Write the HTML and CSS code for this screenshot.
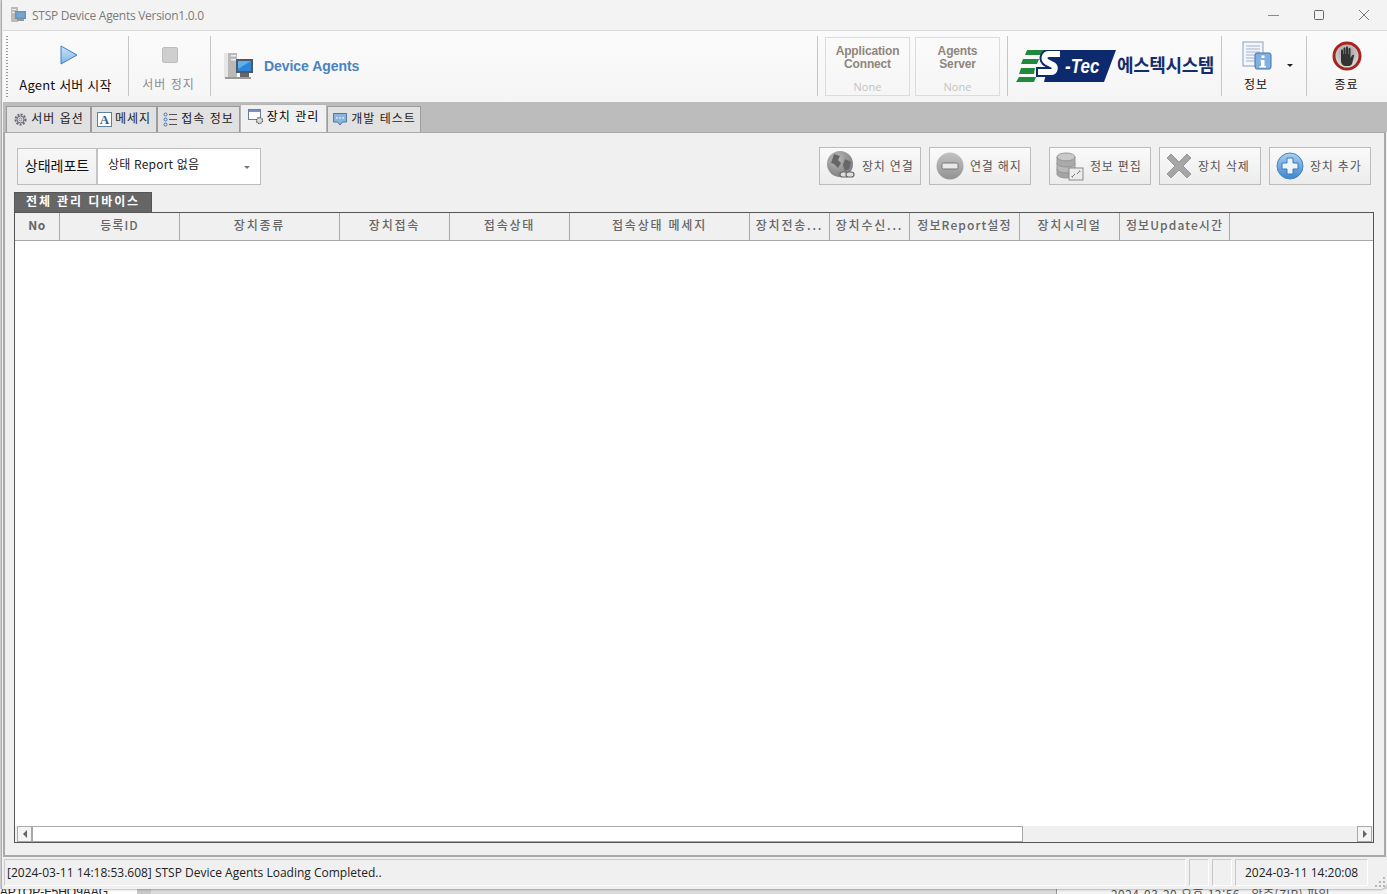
FILE: index.html
```html
<!DOCTYPE html>
<html lang="ko">
<head>
<meta charset="utf-8">
<title>STSP Device Agents Version1.0.0</title>
<link rel="stylesheet" href="styles.css">
</head>
<body>
<div class="window">
  <header class="titlebar">
    <svg class="app-icon" width="18" height="18" viewBox="0 0 18 18"><rect x="1" y="1" width="7" height="15" fill="#a9a9a9"/><rect x="2" y="3" width="4" height="1" fill="#eee"/><rect x="2" y="6" width="4" height="1" fill="#eee"/><rect x="5" y="5" width="11" height="8" fill="#4a6f94"/><rect x="6.500" y="6.500" width="8" height="5" fill="#3f8fd2"/><rect x="7" y="13" width="7" height="2" fill="#777"/></svg>
    <span class="title-text">STSP Device Agents Version1.0.0</span>
    <div class="caption">
      <svg width="14" height="14" viewBox="0 0 14 14"><path d="M1 7.500h11" stroke="#8a8a8a" fill="none"/></svg>
      <svg width="14" height="14" viewBox="0 0 14 14"><rect x="2.500" y="2.500" width="9" height="9" rx="1" stroke="#666" fill="none"/></svg>
      <svg width="14" height="14" viewBox="0 0 14 14"><path d="M2 2l10 10M12 2L2 12" stroke="#777" fill="none"/></svg>
    </div>
  </header>

  <section class="toolbar">
    <div class="grip"></div>
    <div class="tool tool-start">
      <svg width="20" height="20" viewBox="0 0 20 20"><defs><linearGradient id="play" x1="0" y1="0" x2="0" y2="1"><stop offset="0" stop-color="#cfe3f7"/><stop offset="1" stop-color="#7fb3e6"/></linearGradient></defs><path d="M2 1l16 9-16 9z" fill="url(#play)" stroke="#3f7fc8"/></svg>
      <span class="tool-label">Agent 서버 시작</span>
    </div>
    <div class="sep"></div>
    <div class="tool tool-stop">
      <svg width="16" height="16" viewBox="0 0 16 16"><rect x=".5" y=".5" width="15" height="15" rx="1.500" fill="#cfcfcf" stroke="#bdbdbd"/></svg>
      <span class="tool-label muted">서버 정지</span>
    </div>
    <div class="sep"></div>
    <div class="brand">
      <svg width="31" height="30" viewBox="0 0 31 30"><rect x="1" y="2" width="13" height="25" fill="#b9b9b9"/><rect x="1" y="2" width="4" height="25" fill="#e6e6e6"/><rect x="8" y="4" width="5" height="1.500" fill="#eee"/><rect x="8" y="8" width="5" height="1.500" fill="#eee"/><path d="M2 26h26v2H2z" fill="#999"/><rect x="13" y="8" width="17" height="14" fill="#4c5a68"/><rect x="15" y="10" width="13" height="10" fill="#2d86d6"/><path d="M15 10h13L15 18z" fill="#5fb0ee"/><rect x="17" y="22" width="9" height="4" fill="#666"/></svg>
      <span class="brand-name">Device Agents</span>
    </div>

    <div class="sep sep-push"></div>
    <div class="status-box">
      <span class="status-title">Application<br>Connect</span>
      <span class="status-value">None</span>
    </div>
    <div class="status-box status-box-narrow">
      <span class="status-title">Agents<br>Server</span>
      <span class="status-value">None</span>
    </div>
    <div class="sep"></div>
    <div class="logo">
      <svg class="logo-mark" width="100" height="32" viewBox="0 0 100 32">
        <path d="M36 0h64L88 32H28z" fill="#0d2a6e"/>
        <path d="M11 0h19l-4 5H9zM7 9h16l-2 5H5zM5 18h14l-1 6H3zM3 27h17l-2 5H0z" fill="#1f8a3c"/>
        <path d="M44 4H33c-5 0-6 6-2 8l6 3c3 2 2 7-2 7H20" fill="none" stroke="#0d2a6e" stroke-width="10"/>
        <path d="M44 4H33c-5 0-6 6-2 8l6 3c3 2 2 7-2 7H22" fill="none" stroke="#fff" stroke-width="6"/>
      </svg>
      <span class="logo-tec">-Tec</span>
      <span class="logo-ko">에스텍시스템</span>
    </div>
    <div class="sep"></div>
    <div class="tool tool-info">
      <svg width="30" height="30" viewBox="0 0 30 30"><rect x="1" y="1" width="20" height="24" fill="#f4f6fb" stroke="#8d9fc0"/><path d="M4 5h14M4 8h14M4 11h14M4 14h10M4 17h10M4 20h9" stroke="#a3b1cc"/><rect x="13" y="12" width="16" height="16" rx="2" fill="#7fb0df" stroke="#3e74ad"/><rect x="19.500" y="14.500" width="3" height="2.500" fill="#fff"/><path d="M18.500 19h4v6h1.500v1.500h-6.500V25h1.500v-4.500h-.5z" fill="#fff"/></svg>
      <span class="tool-label">정보</span>
      <span class="drop-caret"></span>
    </div>
    <div class="sep"></div>
    <div class="tool tool-exit">
      <svg width="30" height="30" viewBox="0 0 30 30"><defs><radialGradient id="hand" cx=".5" cy=".35" r=".7"><stop offset="0" stop-color="#999"/><stop offset="1" stop-color="#e8e8e8"/></radialGradient></defs><circle cx="15" cy="15" r="13" fill="url(#hand)" stroke="#a8241c" stroke-width="3"/><path d="M9 14V9.500c0-1.500 2-1.500 2 0V13h.5V7.500c0-1.500 2-1.500 2 0V13h.5V6.500c0-1.500 2-1.500 2 0V13h.5V8c0-1.500 2-1.500 2 0v9l1.500-2.500c1-1.500 2.500-.5 2 .5L20 23c-1 1.500-2 2-4 2h-2c-3 0-5-2-5-5z" fill="#333"/></svg>
      <span class="tool-label">종료</span>
    </div>
  </section>

  <section class="tabstrip">
    <div class="tab tab-options">
      <svg width="15" height="15" viewBox="0 0 15 15"><circle cx="7.500" cy="7.500" r="5" fill="none" stroke="#667" stroke-width="2" stroke-dasharray="2 1.300"/><circle cx="7.500" cy="7.500" r="3.500" fill="none" stroke="#667"/><circle cx="7.500" cy="7.500" r="1.500" fill="none" stroke="#889"/></svg>
      <span>서버 옵션</span>
    </div>
    <div class="tab tab-message">
      <span class="letter-a">A</span>
      <span>메세지</span>
    </div>
    <div class="tab tab-access">
      <svg width="15" height="15" viewBox="0 0 15 15"><circle cx="2.500" cy="2.500" r="1.500" fill="none" stroke="#3c78b8"/><circle cx="2.500" cy="7.500" r="1.500" fill="none" stroke="#3c78b8"/><circle cx="2.500" cy="12.500" r="1.500" fill="none" stroke="#3c78b8"/><path d="M6 2.500h8M6 7.500h8M6 12.500h8" stroke="#555" fill="none"/></svg>
      <span>접속 정보</span>
    </div>
    <div class="tab tab-active">
      <svg width="16" height="16" viewBox="0 0 16 16"><rect x=".5" y=".5" width="12" height="10" fill="#fff" stroke="#667f9f"/><rect x="1" y="1" width="11" height="2" fill="#6f94c0"/><circle cx="11.500" cy="11.500" r="3" fill="#ddd" stroke="#555" stroke-width="1.300" stroke-dasharray="1.500 .8"/></svg>
      <span>장치 관리</span>
    </div>
    <div class="tab tab-dev">
      <svg width="16" height="15" viewBox="0 0 16 15"><path d="M1.500 1.500h13v8.500h-4l-2.500 3-2.500-3h-4z" fill="#8db4dc" stroke="#4e77a5"/><path d="M4 5.800h1.500M7.200 5.800h1.500M10.400 5.800h1.500" stroke="#fff" stroke-width="1.300"/></svg>
      <span>개발 테스트</span>
    </div>
  </section>

  <main class="panel">
    <div class="controls">
      <div class="report">
        <div class="report-label">상태레포트</div>
        <div class="report-select">
          <span class="select-text">상태 Report 없음</span>
          <span class="select-caret"></span>
        </div>
      </div>
      <div class="actions">
        <button class="action">
          <svg width="30" height="32" viewBox="0 0 30 32"><defs><radialGradient id="globe" cx=".35" cy=".3" r=".8"><stop offset="0" stop-color="#bbb"/><stop offset="1" stop-color="#777"/></radialGradient></defs><circle cx="14" cy="14" r="13" fill="url(#globe)"/><path d="M8 4l6 2-2 4 3 3-3 5-4-4-3-1zM19 9l6 3-2 7-4 2-2-6z" fill="#666"/><rect x="14" y="22" width="8" height="5" rx="2.500" fill="#ddd" stroke="#666" stroke-width="1.200"/><rect x="20" y="22" width="8" height="5" rx="2.500" fill="#ddd" stroke="#666" stroke-width="1.200"/></svg>
          <span>장치 연결</span>
        </button>
        <button class="action">
          <svg width="28" height="28" viewBox="0 0 28 28"><defs><linearGradient id="grayball" x1="0" y1="0" x2="0" y2="1"><stop offset="0" stop-color="#c2c2c2"/><stop offset="1" stop-color="#939393"/></linearGradient></defs><circle cx="14" cy="14" r="13.500" fill="url(#grayball)"/><rect x="6" y="11" width="16" height="6" rx="1.500" fill="#e9e9e9" stroke="#777"/></svg>
          <span>연결 해지</span>
        </button>
        <button class="action action-gap">
          <svg width="28" height="29" viewBox="0 0 28 29"><ellipse cx="10" cy="5" rx="9" ry="4" fill="#c9c9c9" stroke="#999"/><path d="M1 5v6c0 2.200 4 4 9 4s9-1.800 9-4V5c0 2.200-4 4-9 4S1 7.200 1 5z" fill="#aaa" stroke="#999"/><path d="M1 11v6c0 2.200 4 4 9 4s9-1.800 9-4v-6c0 2.200-4 4-9 4s-9-1.800-9-4z" fill="#b9b9b9" stroke="#999"/><path d="M1 17v5c0 2.200 4 4 9 4s9-1.800 9-4v-5c0 2.200-4 4-9 4s-9-1.800-9-4z" fill="#a5a5a5" stroke="#999"/><rect x="13" y="16" width="14" height="12" fill="#ececec" stroke="#8a8a8a"/><path d="M16 25l3-3m-2 3h-1v-1M24 19l-3 3m2-3h1v1" stroke="#777" fill="none"/></svg>
          <span>정보 편집</span>
        </button>
        <button class="action">
          <svg width="26" height="26" viewBox="0 0 26 26"><path d="M5 1l8 8 8-8 4 4-8 8 8 8-4 4-8-8-8 8-4-4 8-8-8-8z" fill="#a6a6a6" stroke="#989898"/></svg>
          <span>장치 삭제</span>
        </button>
        <button class="action">
          <svg width="28" height="28" viewBox="0 0 28 28"><defs><linearGradient id="blueball" x1="0" y1="0" x2="0" y2="1"><stop offset="0" stop-color="#a9d0f2"/><stop offset="1" stop-color="#3b86d0"/></linearGradient></defs><circle cx="14" cy="14" r="13" fill="url(#blueball)" stroke="#4a86c0"/><path d="M11 6h6v5h5v6h-5v5h-6v-5H6v-6h5z" fill="#edf5fc" stroke="#3d78b5"/></svg>
          <span>장치 추가</span>
        </button>
      </div>
    </div>

    <div class="grid-caption">전체 관리 디바이스</div>
    <div class="grid">
      <div class="grid-head">
        <div class="col col-no">No</div>
        <div class="col col-120 col-mixed">등록ID</div>
        <div class="col col-160">장치종류</div>
        <div class="col col-110">장치접속</div>
        <div class="col col-120">접속상태</div>
        <div class="col col-180">접속상태 메세지</div>
        <div class="col col-80">장치전송...</div>
        <div class="col col-80">장치수신...</div>
        <div class="col col-110 col-mixed">정보Report설정</div>
        <div class="col col-100">장치시리얼</div>
        <div class="col col-110 col-mixed">정보Update시간</div>
      </div>
      <div class="grid-body"></div>
      <div class="hscroll">
        <div class="scroll-btn"><span class="arrow-left"></span></div>
        <div class="scroll-thumb"></div>
        <div class="scroll-track"></div>
        <div class="scroll-btn"><span class="arrow-right"></span></div>
      </div>
    </div>
  </main>

  <footer class="statusbar">
    <div class="cell cell-msg">[2024-03-11 14:18:53.608] STSP Device Agents Loading Completed..</div>
    <div class="cell cell-blank"></div>
    <div class="cell cell-blank"></div>
    <div class="cell cell-time">2024-03-11 14:20:08</div>
    <svg class="sizer" width="12" height="12" viewBox="0 0 12 12"><path d="M9 1h2v2H9zM5 5h2v2H5zM9 5h2v2H9zM1 9h2v2H1zM5 9h2v2H5zM9 9h2v2H9z" fill="#b5b5b5"/></svg>
  </footer>
</div>
<div class="desktop">
  <span class="desk-host">LAPTOP-F5HQ9AAG</span>
  <span class="desk-file">2024-03-20 오후 12:56 &nbsp; 압축(ZIP) 파일</span>
</div>
</body>
</html>
```
FILE: styles.css
```css
* { box-sizing: border-box; }
html, body { margin: 0; height: 100%; }
body {
  width: 1387px;
  height: 894px;
  overflow: hidden;
  background: #dcdcdc;
  font-family: "Liberation Sans", "Noto Sans CJK KR", sans-serif;
  font-size: 12px;
  color: #222;
  position: relative;
}
svg { display: block; flex: none; }

.window {
  height: 889px;
  margin-left: 1px;
  padding-left: 1px;
  display: flex;
  flex-direction: column;
  background: #f0f0f0;
  border-left: 1px solid #9db4c8;
  border-bottom-right-radius: 7px;
  position: relative;
  z-index: 1;
  box-shadow: 0 1px 2px rgba(0,0,0,.25);
}

/* title bar */
.titlebar {
  height: 31px;
  flex: none;
  display: flex;
  align-items: center;
  padding-left: 7px;
  background: #f3f3f3;
  border-bottom: 1px solid #d9d9d9;
}
.app-icon { margin-right: 4px; opacity: .75; }
.title-text { font: 12px "Open Sans", "Liberation Sans", sans-serif; color: #7b7b7b; letter-spacing: -.28px; }
.caption {
  margin-left: auto;
  display: flex;
  gap: 31px;
  padding-right: 16px;
}

/* toolbar */
.toolbar {
  height: 71px;
  flex: none;
  display: flex;
  align-items: stretch;
  padding: 5px 0 0 3px;
  background: linear-gradient(#fbfbfb, #f5f5f5);
  position: relative;
}
.grip {
  width: 2px;
  margin: 0 1px 5px 0;
  background-image: linear-gradient(#9a9a9a 50%, transparent 50%);
  background-size: 2px 3px;
}
.sep { width: 1px; background: #c6c6c6; margin-bottom: 6px; flex: none; }
.sep-push { margin-left: auto; }

.tool {
  display: flex;
  flex-direction: column;
  align-items: center;
  position: relative;
  flex: none;
}
.tool-label {
  font: 13px "Noto Sans CJK KR", "Liberation Sans", sans-serif;
  line-height: 18px;
  color: #111;
}
.tool-label.muted { color: #8c8c8c; }
.tool-start { width: 119px; padding-top: 9px; }
.tool-start .tool-label { margin: 11px 6px 0 0; letter-spacing: .2px; }
.tool-stop { width: 81px; padding-top: 11px; }
.tool-stop .tool-label { margin: 12px 2px 0 0; font-size: 12px; letter-spacing: 1px; }
.tool-info { width: 84px; padding-top: 5px; align-items: flex-start; padding-left: 20px; }
.tool-info .tool-label { margin-top: 4px; padding-left: 2px; font-size: 12px; letter-spacing: 1px; }
.tool-exit { width: 80px; padding-top: 5px; }
.tool-exit .tool-label { margin: 4px 1px 0 0; font-size: 12px; letter-spacing: 1px; }
.drop-caret {
  position: absolute;
  left: 65px;
  top: 28px;
  border: 3px solid transparent;
  border-top: 3px solid #222;
}

.brand {
  display: flex;
  align-items: center;
  gap: 10px;
  padding: 0 0 6px 12px;
}
.brand-name { font: bold 14px "Liberation Sans", sans-serif; color: #4a83bf; letter-spacing: -.05px; }

.status-box {
  width: 85px;
  height: 59px;
  margin: 1px 0 0 7px;
  border: 1px solid #dcdcdc;
  display: flex;
  flex-direction: column;
  align-items: center;
  text-align: center;
  padding-top: 7px;
  flex: none;
}
.status-box-narrow { margin-left: 5px; margin-right: 7px; }
.status-title { font: bold 12px/13px "Liberation Sans", sans-serif; color: #90867c; letter-spacing: -.15px; }
.status-value { font: 11px "Open Sans", sans-serif; color: #c3c3c3; margin-top: 8px; }

.logo {
  width: 213px;
  position: relative;
  display: flex;
  align-items: center;
  padding: 0 0 6px 8px;
  flex: none;
}
.logo-tec {
  position: absolute;
  left: 54px;
  top: 19px;
  font: italic bold 20px "Liberation Sans", sans-serif;
  color: #fff;
  transform: scaleX(.85);
}
.logo-ko {
  margin: 0 0 4px 1px;
  font: bold 18px "Noto Sans CJK KR", sans-serif;
  line-height: 20px;
  color: #142c6c;
  letter-spacing: -.4px;
  white-space: nowrap;
}

/* tabs */
.tabstrip {
  height: 30px;
  flex: none;
  display: flex;
  align-items: flex-end;
  padding-left: 3px;
  background: #bcbcbc;
}
.tab {
  height: 26px;
  flex: none;
  display: flex;
  align-items: center;
  justify-content: center;
  gap: 3px;
  background: #e1e1e1;
  border: 1px solid #9c9c9c;
  border-bottom: none;
  font: 12px "Noto Sans CJK KR", sans-serif;
  color: #222;
  letter-spacing: 1px;
}
.tab > span:last-child { padding-bottom: 4px; }
.tab-options { width: 85px; }
.tab-message { width: 66px; }
.tab-access { width: 83px; }
.tab-dev { width: 94px; }
.tab-active {
  width: 87px;
  height: 28px;
  background: #f0f0f0;
  border-color: #b5b5b5;
  padding-bottom: 3px;
  color: #000;
}
.letter-a {
  width: 15px;
  height: 15px;
  border: 1px solid #5c7fa8;
  background: #fff;
  font: bold 13px/13px "Liberation Serif", serif;
  color: #2e5d9a;
  text-align: center;
  letter-spacing: 0;
}

/* panel */
.panel {
  flex: 1;
  min-height: 0;
  display: flex;
  flex-direction: column;
  background: #f0f0f0;
  margin-right: 1px;
  padding: 15px 10px 12px 9px;
  border: 2px solid #a9a9a9;
  border-top: 1px solid #a9a9a9;
}
.controls {
  height: 37px;
  flex: none;
  display: flex;
  justify-content: space-between;
  padding-left: 3px;
}
.report { display: flex; height: 37px; border: 1px solid #bdbdbd; background: #fff; }
.report-label {
  width: 80px;
  display: flex;
  align-items: center;
  justify-content: center;
  background: linear-gradient(#f7f7f7, #efefef);
  border-right: 2px solid #c4c4c4;
  font: 14px "Noto Sans CJK KR", sans-serif;
  color: #111;
  padding-bottom: 4px;
}
.report-select {
  width: 162px;
  display: flex;
  align-items: center;
  justify-content: space-between;
  padding: 0 10px 0 10px;
  font: 12px "Noto Sans CJK KR", sans-serif;
  color: #222;
  letter-spacing: .2px;
}
.select-text { padding-bottom: 6px; }
.select-caret { border: 3px solid transparent; border-top: 3px solid #777; margin-top: 4px; }

.actions { display: flex; gap: 8px; padding-right: 3px; margin-top: -1px; }
.action {
  width: 102px;
  height: 38px;
  display: flex;
  align-items: center;
  gap: 6px;
  padding: 0 0 0 6px;
  border: 1px solid #bcbcbc;
  background: linear-gradient(#fafafa, #ececec);
  font: 12px "Noto Sans CJK KR", sans-serif;
  color: #555;
  letter-spacing: .8px;
  white-space: nowrap;
}
.action span { padding-bottom: 2px; }
.action-gap { margin-left: 10px; }

.grid-caption {
  margin-top: 7px;
  width: 138px;
  height: 20px;
  flex: none;
  background: #666;
  border: 1px solid #555;
  border-bottom: none;
  color: #fff;
  font: bold 12px/16px "Noto Sans CJK KR", sans-serif;
  text-align: center;
  letter-spacing: 1.9px;
}
.grid {
  flex: 1;
  min-height: 0;
  display: flex;
  flex-direction: column;
  border: 1px solid #555;
  background: #fff;
}
.grid-head {
  height: 28px;
  flex: none;
  display: flex;
  background: #f0f0f0;
  border-bottom: 1px solid #a6a6a6;
}
.col {
  flex: none;
  display: flex;
  align-items: center;
  justify-content: center;
  border-right: 1px solid #a6a6a6;
  font: 500 12px "Noto Sans CJK KR", sans-serif;
  color: #666;
  letter-spacing: 1.8px;
  white-space: nowrap;
  padding-bottom: 5px;
}
.col-no { width: 45px; letter-spacing: .4px; font-weight: bold; }
.col-mixed { letter-spacing: 1.1px; }
.col-80 { width: 80px; }
.col-100 { width: 100px; }
.col-110 { width: 110px; }
.col-120 { width: 120px; }
.col-160 { width: 160px; }
.col-180 { width: 180px; }
.grid-body { flex: 1; min-height: 0; background: #fff; }
.hscroll {
  height: 16px;
  flex: none;
  display: flex;
  background: #f0f0f0;
  padding: 0 1px 0 2px;
}
.scroll-btn {
  width: 15px;
  flex: none;
  display: flex;
  align-items: center;
  justify-content: center;
  background: #f4f4f4;
  border: 1px solid #a9a9a9;
}
.arrow-left { border: 4px solid transparent; border-left: 0; border-right: 4px solid #666; }
.arrow-right { border: 4px solid transparent; border-right: 0; border-left: 4px solid #666; }
.scroll-thumb {
  width: 991px;
  flex: none;
  background: #fff;
  border: 1px solid #a9a9a9;
}
.scroll-track { flex: 1; }

/* status bar */
.statusbar {
  height: 32px;
  flex: none;
  display: flex;
  align-items: stretch;
  gap: 3px;
  padding: 2px 0 3px 1px;
  background: #f0f0f0;
  position: relative;
  border-bottom-right-radius: 7px;
}
.cell {
  border-top: 1px solid #c8c8c8;
  border-left: 1px solid #c8c8c8;
  background: #f0f0f0;
  border-bottom: 1px solid #fff;
  border-right: 1px solid #fff;
  display: flex;
  align-items: center;
  font: 12px "Open Sans", "Liberation Sans", sans-serif;
  color: #222;
  white-space: nowrap;
}
.cell-msg { width: 1182px; padding-left: 2px; }
.cell-blank { width: 20px; }
.cell-time { width: 133px; padding-left: 9px; }
.sizer { position: absolute; right: 1px; bottom: 1px; }

/* what shows behind the window */
.desktop {
  height: 5px;
  position: relative;
  overflow: hidden;
  background: linear-gradient(90deg, #fff 0 137px, #c9c9c9 137px 151px, #dbdbdb 151px 1056px, #999 1056px 1057px, #f3f3f3 1057px);
}
.desk-host {
  position: absolute;
  left: -7px;
  top: -4px;
  font: 12px "Liberation Sans", sans-serif;
  color: #222;
}
.desk-file {
  position: absolute;
  left: 1111px;
  top: -4px;
  font: 12px "Noto Sans CJK KR", sans-serif;
  color: #555;
  white-space: nowrap;
  letter-spacing: .45px;
}
```
